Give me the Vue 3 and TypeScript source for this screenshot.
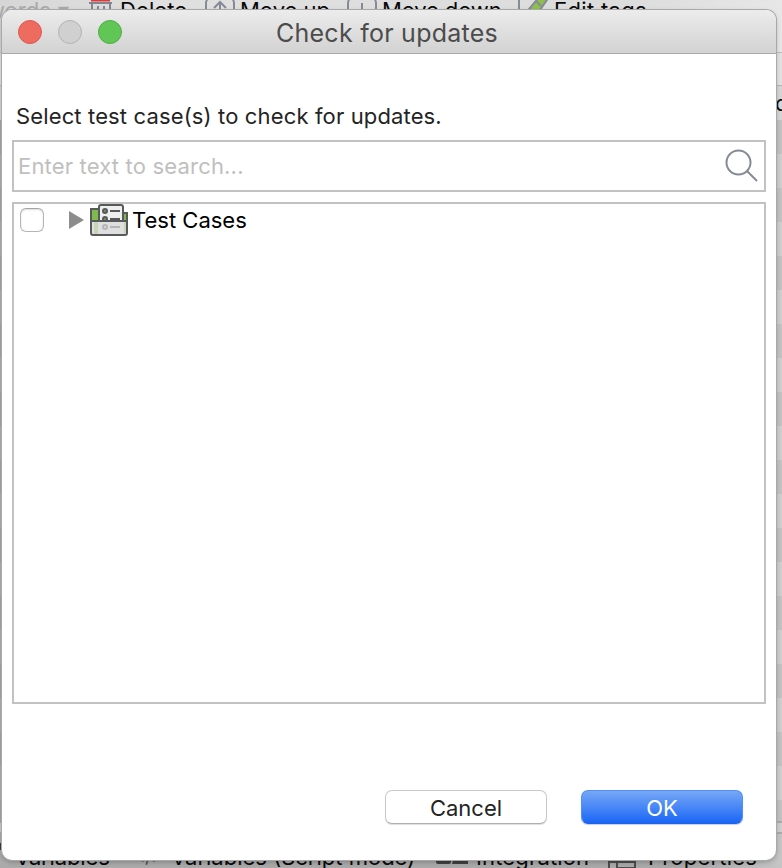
<script setup lang="ts">
import { ref } from 'vue'

const search = ref('')
const checked = ref(false)
</script>

<template>
  <div class="desktop">
    <div class="toolbar">
      <span class="tool keywords">words</span>
      <span class="tool caret">▾</span>
      <svg class="tool trash" width="24" height="24" viewBox="0 0 24 24" fill="none" stroke="#818791" stroke-width="2">
        <path d="M3 4V21H21V4M9 7v10M15 7v10" /><path d="M0 4H23" />
        <rect x="2" y="0" width="19" height="2.5" fill="#df3938" stroke="none" />
      </svg>
      <span class="tool delete">Delete</span>
      <svg class="tool up" width="30" height="28" viewBox="0 0 30 28" fill="none" stroke="#858b96" stroke-width="2">
        <rect x="1" y="1" width="28" height="26" rx="5" /><path d="M15 22V5M9 11l6-6 6 6" />
      </svg>
      <span class="tool move-up">Move up</span>
      <svg class="tool down" width="30" height="28" viewBox="0 0 30 28" fill="none" stroke="#858b96" stroke-width="2">
        <rect x="1" y="1" width="28" height="26" rx="5" /><path d="M15 6v17M9 17l6 6 6-6" />
      </svg>
      <span class="tool move-down">Move down</span>
      <svg class="tool edit" width="32" height="24" viewBox="0 0 32 24" stroke="#858b96" stroke-width="2">
        <path d="M1 0v12" /><path d="M7 14L22-4l9 1L17 17z" fill="#8fc04d" /><path d="M18 1l5 5" />
      </svg>
      <span class="tool edit-tags">Edit tags</span>
    </div>
    <div class="table-head"></div>
    <div class="table-row-head"><span>d</span></div>
    <div class="rows"></div>
    <div class="tab-line"></div>
    <div class="tabs">
      <i class="marker"></i>
      <span class="tab variables">Variables</span>
      <span class="tab code">&lt;/&gt;</span>
      <span class="tab script">Variables (Script mode)</span>
      <svg class="tab puzzle" width="32" height="24" viewBox="0 0 32 24" fill="#414141">
        <rect width="15" height="24" rx="2" /><path d="M22 0h10v24H16z" />
      </svg>
      <span class="tab integration">Integration</span>
      <svg class="tab grid" width="28" height="26" viewBox="0 0 28 26" fill="none" stroke="#4c4c4c" stroke-width="2">
        <path d="M1 1H27V25H1zM9 1V25M9 7H27" />
      </svg>
      <span class="tab properties">Properties</span>
    </div>

    <section class="dialog">
      <header class="titlebar">
        <div class="lights"><i class="close"></i><i class="minimize"></i><i class="zoom"></i></div>
        <h1><span>Check for updates</span></h1>
      </header>
      <main>
        <p class="prompt">Select test case(s) to check for updates.</p>
        <label class="search">
          <input v-model="search" type="text" placeholder="Enter text to search..." />
          <svg width="34" height="34" viewBox="0 0 34 34" fill="none" stroke="#858b94" stroke-width="2">
            <circle cx="13.5" cy="13.5" r="12" /><path d="M22 22L32 32" />
          </svg>
        </label>
        <div class="tree">
          <div class="node">
            <button class="checkbox" :aria-pressed="checked" @click="checked = !checked"></button>
            <svg class="arrow" width="15" height="18" viewBox="0 0 15 18"><path d="M0 0L15 9L0 18z" fill="#8c8c8c" /></svg>
            <svg class="folder" width="38" height="32" viewBox="0 0 38 32" fill="none" stroke="#57595a" stroke-width="2">
              <path d="M1 18V5H9V18zM33 9h4v9h-4z" fill="#80b94c" />
              <path d="M9 18V3q0-2 2-2H31q2 0 2 2V18z" fill="#eeefef" />
              <circle cx="15" cy="7" r="2" fill="#819777" /><path d="M20 7h10M20 15h10" />
              <circle cx="15" cy="15" r="2" fill="#819777" />
              <path d="M1 17H37V29q0 2-2 2H3q-2 0-2-2z" fill="#dedfde" />
              <path d="M4 18v12H8V18zM34 18v12h2V18z" fill="#c5d5b8" stroke="none" />
              <g stroke="#b6b6b6"><circle cx="15" cy="23" r="2" /><path d="M20 23h10" /></g>
            </svg>
            <span class="label">Test Cases</span>
          </div>
        </div>
        <footer>
          <button class="push cancel"><span>Cancel</span></button>
          <button class="push ok"><span>OK</span></button>
        </footer>
      </main>
    </section>
  </div>
</template>

<style>
body { margin: 0; overflow: hidden; }
</style>

<style scoped>
* { box-sizing: border-box; }
.desktop {
  position: relative;
  display: flex;
  flex-direction: column;
  width: 782px;
  height: 868px;
  overflow: hidden;
  background: #d0d0d0;
  font-family: Inter, "Liberation Sans", sans-serif;
  font-size: 22px;
}
.toolbar { position: relative; height: 53px; flex: none; background: linear-gradient(90deg, #d6d6d6, #e0e0e0 20%, #dcdcdc 80%, #e7e7e7); border-bottom: 1px solid #bcbcbc; }
.tool, .tab { position: absolute; line-height: 28px; white-space: pre; color: #080808; }
.tool { top: -4px; }
.keywords { left: -13px; color: #aaa; }
.caret { left: 58px; color: #aaa; }
.trash { left: 89px; top: -1px; }
.delete { left: 120px; letter-spacing: .1px; }
.up { left: 205px; top: -3px; }
.move-up { left: 240px; }
.down { left: 347px; top: -3px; }
.move-down { left: 382px; letter-spacing: -.15px; }
.edit { left: 518px; top: 0; }
.edit-tags { left: 554px; letter-spacing: .3px; }
.table-head { height: 33px; flex: none; background: #e2e2e2; border-bottom: 1px solid #b5b5b5; }
.table-row-head { display: flex; height: 34px; flex: none; justify-content: flex-end; background: #d6d6d6; line-height: 34px; }
.table-row-head span { width: 7px; color: #111; }
.rows { flex: 1; background: linear-gradient(90deg, rgba(0, 0, 0, .14) 2px, transparent 2px), repeating-linear-gradient(#c2c2c2 0 34px, #cecece 34px 68px); }
.tab-line { height: 13px; flex: none; background: #cecece; border-top: 2px solid #aaa; border-bottom: 2px solid #aaa; }
.tabs { position: relative; height: 34px; flex: none; background: linear-gradient(90deg, #aaa, #a9a9a9 88%, #c5c5c5); }
.marker { position: absolute; left: 0; top: 9px; width: 2px; height: 7px; background: #3c3c3c; }
.tab { top: 9px; }
.variables { left: 15px; letter-spacing: -.15px; }
.code { left: 134px; font-size: 17px; color: #444; }
.script { left: 171px; }
.puzzle { left: 436px; top: 6px; }
.integration { left: 476px; letter-spacing: .15px; }
.grid { left: 608px; top: 27px; }
.properties { left: 648px; letter-spacing: .2px; }
.dialog {
  position: absolute;
  left: 2px;
  top: 10px;
  width: 774px;
  height: 850px;
  border-radius: 10px;
  overflow: hidden;
  background: #fff;
  box-shadow: 0 0 0 1px #a9a9a9, 0 2px 5px rgba(0, 0, 0, .25);
}
.titlebar { display: grid; grid-template-columns: 108px 1fr 108px; align-items: center; height: 44px; padding: 0 16px 0 12px; border-bottom: 1px solid #aaa; background: linear-gradient(#ececec, #d2d2d2); }
.lights { display: flex; gap: 16px; padding-left: 4px; }
.lights i { width: 24px; height: 24px; border-radius: 50%; }
.close { background: #ed6b5f; border: 1px solid #d95a50; }
.minimize { background: #d0d0d0; border: 1px solid #b3b3b3; }
.zoom { background: #61c655; border: 1px solid #50ad45; }
h1 { margin: 0; padding-top: 2px; text-align: center; font-size: 25px; line-height: 32px; font-weight: 400; letter-spacing: .25px; color: #4c4c4c; white-space: nowrap; }
main { padding: 46px 10px 0; }
.prompt { margin: 0; padding-left: 4px; height: 40px; line-height: 33px; color: #242424; letter-spacing: .14px; white-space: nowrap; }
.search { display: flex; align-items: center; height: 52px; padding: 0 5px 0 4px; border: 2px solid #c2c2c2; }
.search input { flex: 1; min-width: 0; padding: 0; border: 0; outline: 0; font: inherit; letter-spacing: .18px; background: transparent; }
.search input::placeholder { color: #bfbfbf; opacity: 1; }
.tree { height: 502px; margin-top: 10px; padding: 0 6px; border: 2px solid #c2c2c2; }
.node { display: flex; align-items: center; height: 32px; }
.checkbox { width: 24px; height: 24px; padding: 0; border: 1px solid #b5b5b5; border-top-color: #a5a5a5; border-radius: 6px; background: #fff; box-shadow: inset 0 1px 2px #ddd; }
.arrow { margin-left: 25px; }
.folder { margin-left: 6px; }
.label { margin-left: 4px; color: #000; letter-spacing: 0; white-space: nowrap; }
footer { display: flex; justify-content: flex-end; gap: 34px; margin-top: 86px; padding-right: 23px; }
.push { width: 162px; height: 34px; padding: 0; border-radius: 7px; font: inherit; line-height: 34px; }
.cancel { border: 1px solid #c9c9c9; border-bottom-color: #b0b0b0; background: #fff; color: #242424; box-shadow: 0 1px 1px #ddd; }
.ok { border: 1px solid #5390ef; border-bottom-color: #1b62ed; background: linear-gradient(#76a8f6, #1b66f5); color: #fff; box-shadow: 0 1px 1px #ccd; }
</style>
